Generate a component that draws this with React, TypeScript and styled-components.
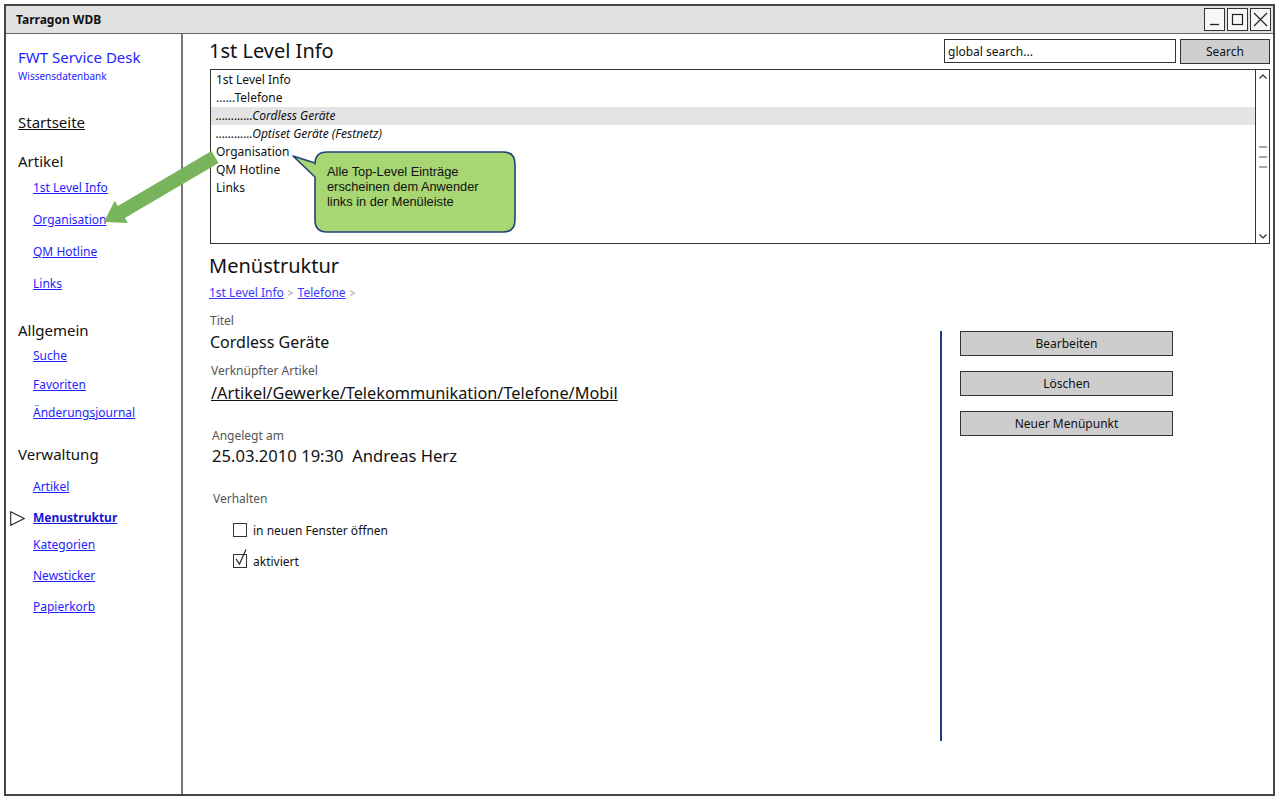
import React from "react";
import styled, { createGlobalStyle } from "styled-components";

const FONT = `"Comic Sans MS", "Noto Sans", sans-serif`;

const Global = createGlobalStyle`
  html, body { margin: 0; padding: 0; background: #fff; }
  body { font-family: ${FONT}; color: #111; }
  * { box-sizing: border-box; }
`;

const Page = styled.div`
  position: relative;
  width: 1280px;
  height: 800px;
  padding: 4px 0 0 4px;
  overflow: hidden;
`;

const Window = styled.div`
  position: relative;
  width: 1271px;
  height: 792px;
  border: 2px solid #444;
  background: #fff;
  display: flex;
  flex-direction: column;
`;

const TitleBar = styled.div`
  height: 28px;
  flex: none;
  background: #e1e1e1;
  border-bottom: 1px solid #666;
  display: flex;
  align-items: center;
  padding: 0 2px 0 10px;
`;

const TitleText = styled.div`
  flex: 1;
  font-size: 12px;
  font-weight: bold;
`;

const Controls = styled.div`
  display: flex;
  gap: 2px;
`;

const CtrlBtn = styled.div`
  width: 21px;
  height: 23px;
  border: 1px solid #333;
  background: #f7f7f7;
  display: flex;
  align-items: center;
  justify-content: center;
`;

const Body = styled.div`
  flex: 1;
  display: flex;
  min-height: 0;
`;

const Sidebar = styled.nav`
  width: 177px;
  flex: none;
  border-right: 2px solid #777;
  padding: 14px 0 0 12px;
  display: flex;
  flex-direction: column;
  align-items: flex-start;
`;

const Brand = styled.div`
  font-size: 15px;
  line-height: 18px;
  color: #1e1eff;
`;

const SubBrand = styled.div`
  font-size: 10px;
  line-height: 18px;
  margin-top: 1px;
  color: #1e1eff;
`;

const HomeLink = styled.a`
  display: block;
  margin-top: 28px;
  font-size: 15px;
  line-height: 18px;
  color: #111;
  text-decoration: underline;
`;

const NavHeading = styled.div<{ $mt: number }>`
  margin-top: ${(p) => p.$mt}px;
  font-size: 15px;
  line-height: 18px;
`;

const NavItem = styled.div<{ $mt: number; $active?: boolean }>`
  display: flex;
  align-items: center;
  gap: 8px;
  margin-top: ${(p) => p.$mt}px;
  margin-left: ${(p) => (p.$active ? -8 : 15)}px;
  height: 18px;
`;

const NavLink = styled.a<{ $active?: boolean }>`
  font-size: 12px;
  line-height: 18px;
  color: ${(p) => (p.$active ? "#1414d8" : "#1e1eff")};
  font-weight: ${(p) => (p.$active ? "bold" : "normal")};
  text-decoration: underline;
`;

const Main = styled.main`
  flex: 1;
  min-width: 0;
  display: flex;
  flex-direction: column;
  padding: 4px 3px 0 26px;
`;

const HeaderRow = styled.div`
  display: flex;
  align-items: center;
  height: 26px;
`;

const PageTitle = styled.h1`
  flex: 1;
  margin: 0;
  font-size: 20px;
  font-weight: normal;
  line-height: 26px;
`;

const SearchInput = styled.input`
  width: 232px;
  height: 24px;
  border: 1px solid #333;
  padding: 0 3px;
  font-family: ${FONT};
  font-size: 12px;
  color: #111;
  background: #fff;
  outline: none;
`;

const SearchButton = styled.button`
  width: 90px;
  height: 25px;
  margin-left: 4px;
  border: 1px solid #333;
  background: #cfcfcf;
  font-family: ${FONT};
  font-size: 12px;
  color: #111;
  padding: 0;
`;

const TreeBox = styled.div`
  position: relative;
  margin: 5px 0 0 1px;
  height: 175px;
  border: 1px solid #333;
  display: flex;
`;

const TreeList = styled.div`
  flex: 1;
  padding: 1px 0 0 0;
`;

const TreeRow = styled.div<{ $selected?: boolean; $italic?: boolean }>`
  height: 18px;
  line-height: 18px;
  padding-left: 5px;
  font-size: 12px;
  font-style: ${(p) => (p.$italic ? "italic" : "normal")};
  background: ${(p) => (p.$selected ? "#e4e4e4" : "transparent")};
`;

const Scrollbar = styled.div`
  width: 14px;
  flex: none;
  border-left: 1px solid #333;
  display: flex;
  flex-direction: column;
  align-items: center;
  justify-content: space-between;
  padding: 3px 0 3px;
`;

const Callout = styled.div`
  position: absolute;
  left: 104px;
  top: 81px;
  width: 200px;
  height: 81px;
  padding: 13px 0 0 12px;
  font-family: "Liberation Sans", Arial, sans-serif;
  font-size: 12.8px;
  line-height: 15px;
  color: #111;
`;

const CalloutShape = styled.svg`
  position: absolute;
  left: -24px;
  top: 0;
  overflow: visible;
`;

const CalloutText = styled.div`
  position: relative;
`;

const SectionTitle = styled.h2`
  margin: 9px 0 0 0;
  font-size: 20px;
  font-weight: normal;
  line-height: 26px;
`;

const Breadcrumb = styled.div`
  margin-top: 6px;
  display: flex;
  align-items: center;
  gap: 4px;
  height: 16px;
`;

const Crumb = styled.a`
  font-size: 12px;
  line-height: 16px;
  color: #3a3aff;
  text-decoration: underline;
`;

const CrumbSep = styled.span`
  font-size: 10px;
  color: #999;
`;

const ContentRow = styled.div`
  flex: 1;
  display: flex;
  margin-top: 12px;
`;

const Form = styled.div`
  flex: 1;
  display: flex;
  flex-direction: column;
  align-items: flex-start;
  padding-left: 1px;
`;

const FieldLabel = styled.div<{ $mt: number; $indent?: number }>`
  margin-top: ${(p) => p.$mt}px;
  padding-left: ${(p) => p.$indent || 0}px;
  font-size: 12px;
  line-height: 16px;
  color: #555;
`;

const FieldValue = styled.div<{ $mt: number; $size: number; $underline?: boolean; $indent?: number }>`
  margin-top: ${(p) => p.$mt}px;
  padding-left: ${(p) => p.$indent || 0}px;
  font-size: ${(p) => p.$size}px;
  line-height: ${(p) => Math.round(p.$size + 5)}px;
  text-decoration: ${(p) => (p.$underline ? "underline" : "none")};
  white-space: pre;
`;

const CheckRow = styled.div<{ $mt: number }>`
  margin-top: ${(p) => p.$mt}px;
  margin-left: 23px;
  height: 18px;
  display: flex;
  align-items: center;
  gap: 6px;
  font-size: 12px;
`;

const CheckBox = styled.span`
  position: relative;
  width: 14px;
  height: 14px;
  border: 1px solid #333;
  background: #fff;
`;

const CheckMark = styled.svg`
  position: absolute;
  left: 1px;
  top: -6px;
  overflow: visible;
`;

const ActionPanel = styled.div`
  width: 330px;
  flex: none;
  margin-top: 18px;
  height: 410px;
  border-left: 2px solid #1f3a8c;
  padding-left: 18px;
  display: flex;
  flex-direction: column;
  gap: 15px;
`;

const ActionButton = styled.button`
  width: 213px;
  height: 25px;
  border: 1px solid #333;
  background: #cdcdcd;
  font-family: ${FONT};
  font-size: 12px;
  color: #111;
  padding: 0;
`;

const Overlay = styled.svg`
  position: absolute;
  left: -6px;
  top: -6px;
  width: 1280px;
  height: 800px;
  pointer-events: none;
  z-index: 3;
`;

const tree = [
  { label: "1st Level Info" },
  { label: "......Telefone" },
  { label: "............Cordless Geräte", selected: true, italic: true },
  { label: "............Optiset Geräte (Festnetz)", italic: true },
  { label: "Organisation" },
  { label: "QM Hotline" },
  { label: "Links" },
];

export default function App() {
  return (
    <>
      <Global />
      <Page>
        <Window>
          <TitleBar>
            <TitleText>Tarragon WDB</TitleText>
            <Controls>
              <CtrlBtn>
                <svg width="13" height="13" viewBox="0 0 13 13">
                  <path d="M2 11.5 H11" stroke="#222" strokeWidth="1.3" />
                </svg>
              </CtrlBtn>
              <CtrlBtn>
                <svg width="13" height="13" viewBox="0 0 13 13">
                  <rect x="1.5" y="1.5" width="10" height="10" fill="none" stroke="#222" strokeWidth="1.2" />
                </svg>
              </CtrlBtn>
              <CtrlBtn>
                <svg width="15" height="15" viewBox="0 0 15 15">
                  <path d="M1 1 L14 14 M14 1 L1 14" stroke="#222" strokeWidth="1.2" />
                </svg>
              </CtrlBtn>
            </Controls>
          </TitleBar>
          <Body>
            <Sidebar>
              <Brand>FWT Service Desk</Brand>
              <SubBrand>Wissensdatenbank</SubBrand>
              <HomeLink>Startseite</HomeLink>

              <NavHeading $mt={21}>Artikel</NavHeading>
              <NavItem $mt={9}><NavLink>1st Level Info</NavLink></NavItem>
              <NavItem $mt={14}><NavLink>Organisation</NavLink></NavItem>
              <NavItem $mt={14}><NavLink>QM Hotline</NavLink></NavItem>
              <NavItem $mt={14}><NavLink>Links</NavLink></NavItem>

              <NavHeading $mt={28}>Allgemein</NavHeading>
              <NavItem $mt={8}><NavLink>Suche</NavLink></NavItem>
              <NavItem $mt={11}><NavLink>Favoriten</NavLink></NavItem>
              <NavItem $mt={10}><NavLink>Änderungsjournal</NavLink></NavItem>

              <NavHeading $mt={23}>Verwaltung</NavHeading>
              <NavItem $mt={15}><NavLink>Artikel</NavLink></NavItem>
              <NavItem $mt={13} $active>
                <svg width="15" height="15" viewBox="0 0 15 15">
                  <path d="M0.7 0.7 L14.3 7.5 L0.7 14.3 Z" fill="#fff" stroke="#222" strokeWidth="1.1" />
                </svg>
                <NavLink $active>Menustruktur</NavLink>
              </NavItem>
              <NavItem $mt={9}><NavLink>Kategorien</NavLink></NavItem>
              <NavItem $mt={13}><NavLink>Newsticker</NavLink></NavItem>
              <NavItem $mt={13}><NavLink>Papierkorb</NavLink></NavItem>
            </Sidebar>

            <Main>
              <HeaderRow>
                <PageTitle>1st Level Info</PageTitle>
                <SearchInput defaultValue="global search..." />
                <SearchButton>Search</SearchButton>
              </HeaderRow>

              <TreeBox>
                <TreeList>
                  {tree.map((t) => (
                    <TreeRow key={t.label} $selected={t.selected} $italic={t.italic}>
                      {t.label}
                    </TreeRow>
                  ))}
                </TreeList>
                <Scrollbar>
                  <svg width="10" height="7" viewBox="0 0 10 7">
                    <path d="M1.5 5.5 L5 2 L8.5 5.5" fill="none" stroke="#222" strokeWidth="1.1" />
                  </svg>
                  <svg width="10" height="24" viewBox="0 0 10 24">
                    <path d="M1 2 H9 M1 12 H9 M1 22 H9" stroke="#555" strokeWidth="1.2" />
                  </svg>
                  <svg width="10" height="7" viewBox="0 0 10 7">
                    <path d="M1.5 1.5 L5 5 L8.5 1.5" fill="none" stroke="#222" strokeWidth="1.1" />
                  </svg>
                </Scrollbar>
                <Callout>
                  <CalloutShape width="226" height="84" viewBox="0 0 226 84">
                    <path
                      d="M36 1 H212 Q224 1 224 13 V69 Q224 81 212 81 H36 Q24 81 24 69 V26 L2 5 L24 12 V13 Q24 1 36 1 Z"
                      fill="#a8d672"
                      stroke="#22407e"
                      strokeWidth="1.6"
                      strokeLinejoin="round"
                    />
                  </CalloutShape>
                  <CalloutText>
                    Alle Top-Level Einträge
                    <br />
                    erscheinen dem Anwender
                    <br />
                    links in der Menüleiste
                  </CalloutText>
                </Callout>
              </TreeBox>

              <SectionTitle>Menüstruktur</SectionTitle>
              <Breadcrumb>
                <Crumb>1st Level Info</Crumb>
                <CrumbSep>&gt;</CrumbSep>
                <Crumb>Telefone</Crumb>
                <CrumbSep>&gt;</CrumbSep>
              </Breadcrumb>

              <ContentRow>
                <Form>
                  <FieldLabel $mt={0}>Titel</FieldLabel>
                  <FieldValue $mt={3} $size={16}>Cordless Geräte</FieldValue>
                  <FieldLabel $mt={10} $indent={1}>Verknüpfter Artikel</FieldLabel>
                  <FieldValue $mt={4} $size={16.3} $underline $indent={1}>
                    /Artikel/Gewerke/Telekommunikation/Telefone/Mobil
                  </FieldValue>
                  <FieldLabel $mt={24} $indent={2}>Angelegt am</FieldLabel>
                  <FieldValue $mt={1} $size={16.6} $indent={2}>25.03.2010 19:30  Andreas Herz</FieldValue>
                  <FieldLabel $mt={24} $indent={3}>Verhalten</FieldLabel>
                  <CheckRow $mt={14}>
                    <CheckBox />
                    in neuen Fenster öffnen
                  </CheckRow>
                  <CheckRow $mt={13}>
                    <CheckBox>
                      <CheckMark width="12" height="17" viewBox="0 0 12 17">
                        <path d="M1 10 L4.5 15 L11 0.5" fill="none" stroke="#222" strokeWidth="1.2" />
                      </CheckMark>
                    </CheckBox>
                    aktiviert
                  </CheckRow>
                </Form>
                <ActionPanel>
                  <ActionButton>Bearbeiten</ActionButton>
                  <ActionButton>Löschen</ActionButton>
                  <ActionButton>Neuer Menüpunkt</ActionButton>
                </ActionPanel>
              </ContentRow>
            </Main>
          </Body>
          <Overlay viewBox="0 0 1280 800">
            <polygon
              points="211.5,151 218.5,163 124.8,217.9 127.9,223.1 104,222 114.7,200.7 117.8,205.9"
              fill="#78b45c"
            />
          </Overlay>
        </Window>
      </Page>
    </>
  );
}
